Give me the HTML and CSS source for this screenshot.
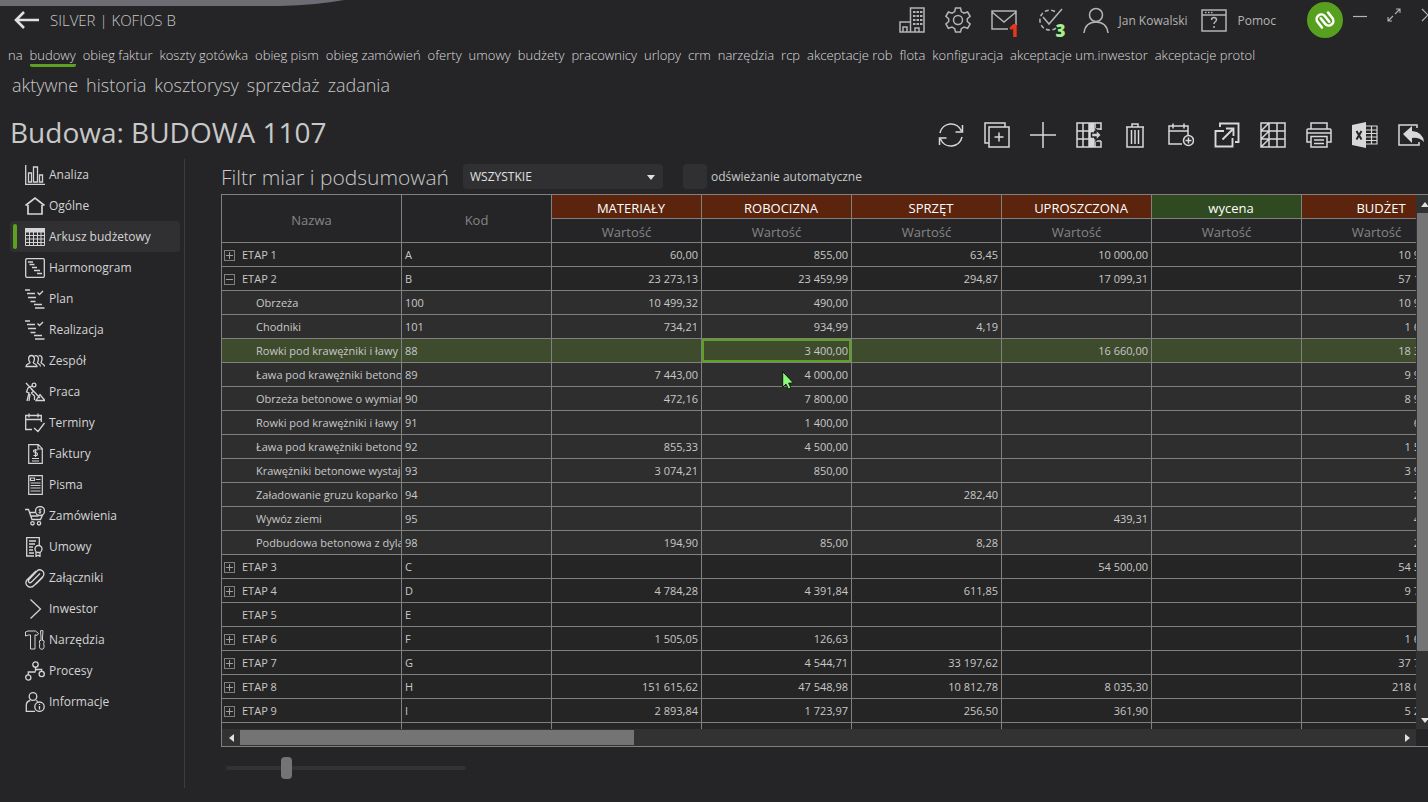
FILE: index.html
```html
<!DOCTYPE html>
<html lang="pl">

<head>
    <meta charset="UTF-8">
    <meta name="viewport" content="width=device-width, initial-scale=1.0">
    <title>Budowa: BUDOWA 1107</title>
    <link rel="stylesheet" href="styles.css">
</head>

<body>
    <svg class="backdrop" width="344" height="6" viewBox="0 0 344 6"><path d="M0 0H344Q318 5 280 6H0z"/></svg>

    <header class="topbar">
        <button class="icon-btn back" aria-label="Wstecz">
            <svg width="26" height="18" viewBox="0 0 26 18"><path d="M25 9H2M10 1L2 9l8 8" stroke-width="2.6"/></svg>
        </button>
        <span class="app-name">SILVER | KOFIOS B</span>
        <div class="top-tools">
            <button class="icon-btn" aria-label="Firma">
                <svg width="26" height="26" viewBox="0 0 26 26"><path d="M11.500 25V1H25v24H1V15h10.500M4 25v-5h4v5M16 25v-4h4v4"/><path d="M14 5h2.500M17.500 5H20M21 5h2.500M14 9h2.500M17.500 9H20M21 9h2.500M14 13h2.500M17.500 13H20M21 13h2.500M14 17h2.500M17.500 17H20M21 17h2.500" stroke-width="2.200"/></svg>
            </button>
            <button class="icon-btn" aria-label="Ustawienia">
                <svg width="26" height="26" viewBox="0 0 26 26"><circle cx="13" cy="13" r="4.500"/><path d="M10.500 1h5l.8 3.600 2.700 1.600 3.600-1.200 2.500 4.300-2.800 2.500v2.700l2.800 2.500-2.500 4.300-3.600-1.200-2.700 1.600-.8 3.300h-5l-.8-3.300L7 20.100l-3.600 1.200L.9 17l2.800-2.500v-2.700L.9 9.300 3.400 5 7 6.200l2.700-1.600z"/></svg>
            </button>
            <button class="icon-btn" aria-label="Wiadomości">
                <svg width="26" height="26" viewBox="0 0 26 26"><path d="M17 22H1V4h24v14M1 5l12 10L25 5"/></svg>
                <span class="badge red">1</span>
            </button>
            <button class="icon-btn" aria-label="Akceptacje">
                <svg width="26" height="26" viewBox="0 0 26 26"><path d="M18 4.500A10 10 0 1 0 21 19" stroke-dasharray="4 2.500"/><path d="M6 10l6 7L25 2"/></svg>
                <span class="badge green">3</span>
            </button>
            <button class="icon-btn user">
                <svg width="26" height="26" viewBox="0 0 26 26"><circle cx="13" cy="8" r="6.500"/><path d="M1 26c1-8 6-11 12-11s11 3 12 11"/></svg>
                <span>Jan Kowalski</span>
            </button>
            <button class="icon-btn help">
                <svg width="26" height="26" viewBox="0 0 26 26"><path d="M1 3h24v21H1zM1 8h24"/><path d="M4 5.500h1.500M7 5.500h1.500M10 5.500h1.500" stroke-width="1.500"/><path d="M10.500 13q0-2.500 2.500-2.500t2.500 2.300c0 2-2.500 2-2.500 4.200M13 19v2"/></svg>
                <span>Pomoc</span>
            </button>
            <svg class="logo" width="36" height="36" viewBox="0 0 36 36"><circle class="disc" cx="18" cy="18" r="18"/><path transform="translate(18 18) rotate(-38)" d="M-7 4V-3a4.650 4.650 0 0 1 9.300 0V4M7-4V3a4.650 4.650 0 0 1-9.300 0V-4"/></svg>
            <div class="window-buttons">
                <button class="icon-btn" aria-label="Minimalizuj"><svg width="14" height="14" viewBox="0 0 14 14"><path d="M0 8.500h14" stroke-width="1.200"/></svg></button>
                <button class="icon-btn" aria-label="Maksymalizuj"><svg width="14" height="14" viewBox="0 0 14 14"><path d="M8 6l5-5M9 1h4v4M6 8l-5 5M1 9v4h4" stroke-width="1.100"/></svg></button>
                <button class="icon-btn" aria-label="Zamknij"><svg width="14" height="14" viewBox="0 0 14 14"><path d="M1 1l12 12M13 1L1 13" stroke-width="1.200"/></svg></button>
            </div>
        </div>
    </header>

    <nav class="modules">
        <a href="#">na</a>
        <a href="#" class="active">budowy</a>
        <a href="#">obieg faktur</a>
        <a href="#">koszty gotówka</a>
        <a href="#">obieg pism</a>
        <a href="#">obieg zamówień</a>
        <a href="#">oferty</a>
        <a href="#">umowy</a>
        <a href="#">budżety</a>
        <a href="#">pracownicy</a>
        <a href="#">urlopy</a>
        <a href="#">crm</a>
        <a href="#">narzędzia</a>
        <a href="#">rcp</a>
        <a href="#">akceptacje rob</a>
        <a href="#">flota</a>
        <a href="#">konfiguracja</a>
        <a href="#">akceptacje um.inwestor</a>
        <a href="#">akceptacje protol</a>
    </nav>

    <nav class="submenu">
        <a href="#">aktywne</a>
        <a href="#">historia</a>
        <a href="#">kosztorysy</a>
        <a href="#">sprzedaż</a>
        <a href="#">zadania</a>
    </nav>

    <div class="title-row">
        <h1>Budowa: BUDOWA 1107</h1>
        <div class="actions">
            <button class="icon-btn" aria-label="Odśwież"><svg width="26" height="26" viewBox="0 0 26 26"><path d="M2 11A11.300 11.300 0 0 1 23.500 9M24.500 3v7h-7M24 15A11.300 11.300 0 0 1 2.500 17M1.500 23v-7h7"/></svg></button>
            <button class="icon-btn" aria-label="Duplikuj"><svg width="26" height="26" viewBox="0 0 26 26"><path d="M5 5h20v20H5zM5 21H1V1h20v4M15 10.500v9M10.500 15h9"/></svg></button>
            <button class="icon-btn" aria-label="Dodaj"><svg width="26" height="26" viewBox="0 0 26 26"><path d="M13 0v26M0 13h26"/></svg></button>
            <button class="icon-btn" aria-label="Kolumny"><svg width="26" height="26" viewBox="0 0 26 26"><path d="M25 8V1H1v24h24v-6M7 1v24M13 1v24M19 1v8M19 17v8M1 9h12M1 17h12M19 7h6M19 19h6"/><path class="fill" d="M13 1h5v24h-5z"/><path d="M15.500 11H20V7.500l5.500 5.500-5.500 5.500V15h-4.500z" class="cut"/></svg></button>
            <button class="icon-btn" aria-label="Usuń"><svg width="26" height="26" viewBox="0 0 26 26"><path d="M4 5h18M5 5v20h16V5M10 5V2h6v3M9.500 8v14M13 8v14M16.500 8v14"/></svg></button>
            <button class="icon-btn" aria-label="Dodaj termin"><svg width="26" height="26" viewBox="0 0 26 26"><path d="M14 22H1V4h19v10M1 9h19M5 1.500v5M16 1.500v5"/><circle cx="20.500" cy="18.500" r="5"/><path d="M20.500 15.500v6M17.500 18.500h6"/></svg></button>
            <button class="icon-btn" aria-label="Otwórz"><svg width="26" height="26" viewBox="0 0 26 26"><path d="M10 9H1.500v15.500h17V16M6 5V1.500h18.500V20H21" stroke-width="1.900"/><path d="M8.500 17.500L19 7M12 6.500h7.500V14" stroke-width="1.900"/></svg></button>
            <button class="icon-btn" aria-label="Siatka"><svg width="26" height="26" viewBox="0 0 26 26"><path d="M1 1h24v24H1zM9 1v24M17 1v24M1 9h24M1 17h24M1 9l8-8M1 17l8-8M1 25l8-8"/></svg></button>
            <button class="icon-btn" aria-label="Drukuj"><svg width="26" height="26" viewBox="0 0 26 26"><path d="M5 7V1h16v6M5 20H1V8q0-1 1-1h22q1 0 1 1v12h-4M1 11h24M5 14.500h16V25H5zM8 18h10M8 21.500h10"/></svg></button>
            <button class="icon-btn" aria-label="Eksport do Excela"><svg width="26" height="26" viewBox="0 0 26 26"><path class="fill" d="M0 3L14 0v26L0 23z"/><path d="M4.500 9l5 8.500M9.500 9l-5 8.500" class="dark"/><path d="M14 4h11v18H14M14 8h11M14 11.500h11M14 15h11M14 18.500h11M19.500 4v18" stroke-width="1.200"/></svg></button>
            <button class="icon-btn" aria-label="Wyjdź"><svg width="26" height="26" viewBox="0 0 26 26"><path d="M19 6V3H1v20h20v-3"/><path class="fill" d="M5 12l9-8v5q11 1 12 11-5-5-12-4v5z"/></svg></button>
        </div>
    </div>

    <main class="workspace">
        <nav class="sidebar">
            <a href="#"><svg width="20" height="20" viewBox="0 0 20 20"><path d="M.7 0v19.300H20M3.500 17V8h3v9zM8.500 17V2h4v15zM14.500 17v-7h3v7z"/></svg>Analiza</a>
            <a href="#"><svg width="20" height="20" viewBox="0 0 20 20"><path d="M.5 9.500L10 2l9.500 7.500M3 9v9h14V9" stroke-width="1.700"/></svg>Ogólne</a>
            <a href="#" class="active"><svg width="20" height="20" viewBox="0 0 20 20"><path class="fill" d="M0 1h20v4.500H0z"/><path d="M.5 2v16.500h19V2M0 8.500h20M0 12h20M0 15.500h20M4.500 5v13M8.500 5v13M12.500 5v13M16 5v13" stroke-width="1"/></svg>Arkusz budżetowy</a>
            <a href="#"><svg width="20" height="20" viewBox="0 0 20 20"><rect x=".7" y=".7" width="18.600" height="18.600" rx="1"/><path d="M3 4h5M4.500 6.500h5M7 9.500h5M9 12.500h6M12 15.500h5" stroke-width="1.300"/></svg>Harmonogram</a>
            <a href="#"><svg width="20" height="20" viewBox="0 0 20 20"><path d="M0 1h5M2 4.500h8M3 8.500h8M5.500 12.500h5M9 15.500h8M10 19h9.500M12.500 3.500l2 2L18 2"/></svg>Plan</a>
            <a href="#"><svg width="20" height="20" viewBox="0 0 20 20"><path d="M0 1h5M2 4.500h8M3 8.500h8M5.500 12.500h5M9 15.500h8M10 19h9.500M12.500 3.500l2 2L18 2"/></svg>Realizacja</a>
            <a href="#"><svg width="20" height="20" viewBox="0 0 20 20"><path d="M1 15.500c0-3 4-2.500 4-4C3 9 3 4.500 6.500 4.500S10 9 8.300 11.500c0 1.500 3.700 1 3.700 4zM9.500 5c3.500-1.500 5 2.500 3 6.500 0 1.500 3 1 3 4M13.500 5c3.500-1.500 4.500 2.500 2.500 6.500 0 1.500 3.500 1 3.500 4"/></svg>Zespół</a>
            <a href="#"><svg width="20" height="20" viewBox="0 0 20 20"><circle cx="9" cy="3" r="1.900"/><path d="M1 1l14 15M7 4L3 6 1.500 10 4 11l-2 8M6 7l2.500 2-2 2 3 3v4M5 12l-1 7M11 18.500l4-6 1.500 2L20 18.500z"/></svg>Praca</a>
            <a href="#"><svg width="20" height="20" viewBox="0 0 20 20"><path d="M7 16.500H.7V2.500h15.600V9M.7 6.500h15.600M4 .5v4M13 .5v4M9 15l4 3.500L19.500 10"/></svg>Terminy</a>
            <a href="#"><svg width="20" height="20" viewBox="0 0 20 20"><path d="M3.700.7h9.600l4 4v14.600H3.700zM13 1v4h4M7 14.500h7M7 17h7M12.500 6H9.800C8 6 8 8.500 10.500 8.500S13 11.500 11 11.500H8.500M10.500 5v8" stroke-width="1.200"/></svg>Faktury</a>
            <a href="#"><svg width="20" height="20" viewBox="0 0 20 20"><path d="M3.700.7h13.600v18.600H3.700zM5.500 3h4v2.500h-4zM11 4.500h4.500M5.500 8h10M5.500 10.500h10M5.500 13h10M5.500 16h10" stroke-width="1.200"/></svg>Pisma</a>
            <a href="#"><svg width="20" height="20" viewBox="0 0 20 20"><path d="M0 3.500h3.500L7 13.500h8.500L17.500 9M4.500 6.500H10M5.500 10h8"/><circle cx="7.500" cy="17.300" r="1.700"/><circle cx="14" cy="17.300" r="1.700"/><circle cx="15" cy="5" r="4.500"/><path d="M16.500 3.500h-1.700c-1.500 0-1 1.500.2 1.500s1.500 1.700 0 1.700h-1.500M15 2.500v5.500" stroke-width=".9"/></svg>Zamówienia</a>
            <a href="#"><svg width="20" height="20" viewBox="0 0 20 20"><path d="M9 19H1.700V.7h12.600V8M4 4h7M4 7h6M4 10h4M4 13h4M4 16h5M11 15v4.500l2-1.200 2 1.200V15"/><circle cx="13.500" cy="12" r="3.500"/></svg>Umowy</a>
            <a href="#"><svg width="20" height="20" viewBox="0 0 20 20"><path d="M15 5.500l-8.500 8.500c-2 2-4-.5-2.500-2.500l8-8.500c3-3 9 .5 6 5.500l-9 9c-3.500 3.500-10 .5-7.500-5L11 3M18 9l-7 7"/></svg>Załączniki</a>
            <a href="#"><svg width="20" height="20" viewBox="0 0 20 20"><path d="M5.500.5l10 9.500-10 9.500"/></svg>Inwestor</a>
            <a href="#"><svg width="20" height="20" viewBox="0 0 20 20"><path d="M.5 2L3 1h7.500l3 2.500L12 5.500l-2-.7V19H5.500V5H3.500L.5 6zM15.500.7h2.500L17.500 7v3.500h1.200q1 1.500 0 3.200 1.300 5.600-1.900 5.600t-2-5.600q-1-1.700 0-3.200H16V7z" stroke-width="1"/></svg>Narzędzia</a>
            <a href="#"><svg width="20" height="20" viewBox="0 0 20 20"><circle cx="10.500" cy="3.500" r="2.700"/><circle cx="3.300" cy="16.500" r="2.600"/><circle cx="16.700" cy="13" r="2.600"/><path d="M10.500 6v4.500M3.300 14v-3h7.200M10.500 8.500h6.200v2"/></svg>Procesy</a>
            <a href="#"><svg width="20" height="20" viewBox="0 0 20 20"><circle cx="8" cy="4.500" r="3.800"/><path d="M10 19.300H1.300V13c0-3 2-4 4-4.500M11 8.500l2 1"/><circle cx="14.500" cy="14.700" r="4.700"/><path d="M14.500 12v1M14.500 14v3.500"/></svg>Informacje</a>
        </nav>

        <section class="content">
            <div class="filters">
                <label for="measure-filter" class="filter-label">Filtr miar i podsumowań</label>
                <div class="select-box">
                    <select id="measure-filter">
                        <option>WSZYSTKIE</option>
                    </select>
                </div>
                <input type="checkbox" id="auto-refresh">
                <label for="auto-refresh" class="check-label">odświeżanie automatyczne</label>
            </div>

            <div class="sheet">
                <div class="sheet-view">
                    <table>
                        <colgroup><col class="col-name"><col span="7"></colgroup>
                        <thead>
                            <tr>
                                <th rowspan="2">Nazwa</th>
                                <th rowspan="2">Kod</th>
                                <th class="group">MATERIAŁY</th>
                                <th class="group">ROBOCIZNA</th>
                                <th class="group">SPRZĘT</th>
                                <th class="group">UPROSZCZONA</th>
                                <th class="group quote">wycena</th>
                                <th class="group">BUDŻET</th>
                            </tr>
                            <tr><th>Wartość</th><th>Wartość</th><th>Wartość</th><th>Wartość</th><th>Wartość</th><th>Wartość</th></tr>
                        </thead>
                        <tbody>
                            <tr><td><button class="expander" aria-label="Rozwiń"></button>ETAP 1</td><td>A</td><td>60,00</td><td>855,00</td><td>63,45</td><td>10 000,00</td><td></td><td>10 978,45</td></tr>
                            <tr><td><button class="expander open" aria-label="Zwiń"></button>ETAP 2</td><td>B</td><td>23 273,13</td><td>23 459,99</td><td>294,87</td><td>17 099,31</td><td></td><td>57 127,30</td></tr>
                            <tr class="child"><td>Obrzeża</td><td>100</td><td>10 499,32</td><td>490,00</td><td></td><td></td><td></td><td>10 989,32</td></tr>
                            <tr class="child"><td>Chodniki</td><td>101</td><td>734,21</td><td>934,99</td><td>4,19</td><td></td><td></td><td>1 673,39</td></tr>
                            <tr class="child selected"><td>Rowki pod krawężniki i ławy</td><td>88</td><td></td><td class="current">3 400,00</td><td></td><td>16 660,00</td><td></td><td>18 360,00</td></tr>
                            <tr class="child"><td>Ława pod krawężniki betonowe</td><td>89</td><td>7 443,00</td><td>4 000,00</td><td></td><td></td><td></td><td>9 943,00</td></tr>
                            <tr class="child"><td>Obrzeża betonowe o wymiarach</td><td>90</td><td>472,16</td><td>7 800,00</td><td></td><td></td><td></td><td>8 972,16</td></tr>
                            <tr class="child"><td>Rowki pod krawężniki i ławy</td><td>91</td><td></td><td>1 400,00</td><td></td><td></td><td></td><td>640,00</td></tr>
                            <tr class="child"><td>Ława pod krawężniki betonowe</td><td>92</td><td>855,33</td><td>4 500,00</td><td></td><td></td><td></td><td>1 555,33</td></tr>
                            <tr class="child"><td>Krawężniki betonowe wystające</td><td>93</td><td>3 074,21</td><td>850,00</td><td></td><td></td><td></td><td>3 924,21</td></tr>
                            <tr class="child"><td>Załadowanie gruzu koparko</td><td>94</td><td></td><td></td><td>282,40</td><td></td><td></td><td>282,40</td></tr>
                            <tr class="child"><td>Wywóz ziemi</td><td>95</td><td></td><td></td><td></td><td>439,31</td><td></td><td>439,31</td></tr>
                            <tr class="child"><td>Podbudowa betonowa z dylatacją</td><td>98</td><td>194,90</td><td>85,00</td><td>8,28</td><td></td><td></td><td>288,18</td></tr>
                            <tr><td><button class="expander" aria-label="Rozwiń"></button>ETAP 3</td><td>C</td><td></td><td></td><td></td><td>54 500,00</td><td></td><td>54 500,00</td></tr>
                            <tr><td><button class="expander" aria-label="Rozwiń"></button>ETAP 4</td><td>D</td><td>4 784,28</td><td>4 391,84</td><td>611,85</td><td></td><td></td><td>9 787,97</td></tr>
                            <tr class="leaf"><td>ETAP 5</td><td>E</td><td></td><td></td><td></td><td></td><td></td><td></td></tr>
                            <tr><td><button class="expander" aria-label="Rozwiń"></button>ETAP 6</td><td>F</td><td>1 505,05</td><td>126,63</td><td></td><td></td><td></td><td>1 631,68</td></tr>
                            <tr><td><button class="expander" aria-label="Rozwiń"></button>ETAP 7</td><td>G</td><td></td><td>4 544,71</td><td>33 197,62</td><td></td><td></td><td>37 742,33</td></tr>
                            <tr><td><button class="expander" aria-label="Rozwiń"></button>ETAP 8</td><td>H</td><td>151 615,62</td><td>47 548,98</td><td>10 812,78</td><td>8 035,30</td><td></td><td>218 012,68</td></tr>
                            <tr><td><button class="expander" aria-label="Rozwiń"></button>ETAP 9</td><td>I</td><td>2 893,84</td><td>1 723,97</td><td>256,50</td><td>361,90</td><td></td><td>5 236,21</td></tr>
                            <tr><td></td><td></td><td></td><td></td><td></td><td></td><td></td><td></td></tr>
                        </tbody>
                    </table>
                </div>
                <div class="scrollbar vertical">
                    <button aria-label="W górę"><svg width="8" height="5" viewBox="0 0 8 5"><path d="M0 5l4-5 4 5z"/></svg></button>
                    <div class="track"><div class="thumb"></div></div>
                    <button aria-label="W dół"><svg width="8" height="5" viewBox="0 0 8 5"><path d="M0 0l4 5 4-5z"/></svg></button>
                </div>
                <div class="scrollbar horizontal">
                    <button aria-label="W lewo"><svg width="5" height="8" viewBox="0 0 5 8"><path d="M5 0L0 4l5 4z"/></svg></button>
                    <div class="track"><div class="thumb"></div></div>
                    <button aria-label="W prawo"><svg width="5" height="8" viewBox="0 0 5 8"><path d="M0 0l5 4-5 4z"/></svg></button>
                </div>
            </div>

            <input type="range" class="zoom" min="0" max="100" value="24" aria-label="Powiększenie">
        </section>
    </main>

    <svg class="pointer" width="12" height="19" viewBox="0 0 12 19"><path d="M.7.7v15.500l3.300-3 2.500 5 2.500-1.200-2.300-4.800 4.800-.2z"/></svg>
</body>

</html>
```
FILE: styles.css
```css
* {
    box-sizing: border-box;
}

body {
    font-family: "Open Sans", "Noto Sans", sans-serif;
    font-size: 13px;
    background-color: #252527;
    color: #c8c8c8;
    margin: 0;
    height: 100vh;
    overflow: hidden;
    display: flex;
    flex-direction: column;
}

a {
    color: inherit;
    text-decoration: none;
}

button {
    background: none;
    border: none;
    padding: 0;
    color: inherit;
    font: inherit;
    cursor: pointer;
}

svg {
    display: block;
    flex: none;
    fill: none;
    stroke: currentColor;
    stroke-width: 1.5;
}

svg .fill {
    fill: currentColor;
    stroke: none;
}

svg .cut {
    fill: #d0d0d0;
    stroke: #252527;
}

svg .dark {
    stroke: #252527;
    stroke-width: 2;
}

.backdrop {
    position: absolute;
    top: 0;
    left: 0;
    fill: #6d6c74;
    stroke: none;
}

.topbar {
    display: flex;
    align-items: center;
    height: 40px;
    flex: none;
    padding-left: 14px;
    gap: 10px;
    white-space: nowrap;
}

.app-name {
    font-size: 15px;
    font-weight: 300;
}

.icon-btn {
    position: relative;
    display: flex;
    align-items: center;
    flex: none;
}

.back {
    color: #e0e0e0;
}

.top-tools {
    display: flex;
    align-items: center;
    gap: 20px;
    margin-left: auto;
    margin-right: -7px;
    color: #b4b4b4;
}

.user,
.help {
    gap: 10px;
    font-size: 12px;
}

.help {
    margin-left: -6px;
}

.badge {
    position: absolute;
    right: -2px;
    bottom: -8px;
    font-size: 17px;
    font-weight: 800;
    line-height: 20px;
}

.red {
    color: #e8391f;
}

.green {
    color: #a4f08c;
    right: -3px;
}

.logo {
    margin-left: 11px;
    stroke: #fff;
    stroke-width: 2.6;
    stroke-linecap: round;
}

.logo .disc {
    fill: #57a01f;
    stroke: none;
}

.window-buttons {
    display: flex;
    align-self: flex-start;
    gap: 20px;
    margin-left: -10px;
    height: 25px;
}

.modules {
    display: flex;
    flex: none;
    gap: 7px;
    height: 32px;
    padding-left: 8px;
    font-size: 13px;
    font-weight: 300;
    line-height: 18px;
    padding-top: 6px;
    white-space: nowrap;
    color: #dcdcdc;
}

.modules a {
    height: 21px;
}

.modules .active {
    border-bottom: 3px solid #5ea022;
    border-radius: 2px;
}

.submenu {
    display: flex;
    flex: none;
    gap: 8px;
    padding-left: 12px;
    font-size: 18px;
    font-weight: 300;
    line-height: 26px;
}

.title-row {
    display: flex;
    flex: none;
    justify-content: space-between;
    align-items: center;
    height: 48px;
    margin-top: 13px;
    padding-left: 10px;
    white-space: nowrap;
}

h1 {
    margin: 0;
    padding-bottom: 7px;
    font-size: 28px;
    font-weight: 400;
    line-height: 40px;
}

.actions {
    display: flex;
    gap: 20px;
    margin-right: 4px;
    color: #d8d8d8;
}

.workspace {
    flex: 1;
    min-height: 0;
    display: flex;
}

.sidebar {
    flex: none;
    width: 185px;
    border-right: 1px solid #3c3c3e;
    margin-bottom: 14px;
    padding-right: 4px;
    padding-left: 10px;
    font-size: 12px;
    color: #d4d4d4;
}

.sidebar a {
    display: flex;
    align-items: center;
    gap: 4px;
    height: 31px;
    padding-left: 15px;
    border-radius: 4px;
}

.sidebar svg {
    stroke-width: 1.3;
}

.sidebar .active {
    background-color: #303032;
    padding-left: 3px;
}

.sidebar .active::before {
    content: "";
    width: 4px;
    height: 25px;
    margin-right: 4px;
    border-radius: 2px;
    background-color: #5ea022;
}

.content {
    flex: 1;
    min-width: 0;
    display: flex;
    flex-direction: column;
    padding-left: 36px;
}

.filters {
    display: flex;
    align-items: center;
    height: 35px;
    flex: none;
}

.filter-label {
    font-size: 21px;
    font-weight: 300;
    line-height: 30px;
    margin-right: 14px;
    white-space: nowrap;
}

.check-label {
    font-size: 12px;
}

.select-box {
    position: relative;
    width: 200px;
    margin-right: 20px;
}

.select-box::after {
    content: "";
    position: absolute;
    right: 8px;
    top: 11px;
    border: 4px solid transparent;
    border-top: 5px solid #e0e0e0;
    border-bottom: none;
    pointer-events: none;
}

select {
    appearance: none;
    display: block;
    width: 100%;
    height: 25px;
    border: none;
    border-radius: 4px;
    padding: 0 7px;
    background-color: #303032;
    color: #e0e0e0;
    font: inherit;
    font-size: 12px;
}

input[type="checkbox"] {
    appearance: none;
    width: 24px;
    height: 25px;
    margin: 0 4px 0 0;
    border-radius: 4px;
    background-color: #303032;
}

.sheet {
    flex: 1;
    min-height: 0;
    display: grid;
    grid-template-columns: minmax(0, 1fr) 17px;
    grid-template-rows: minmax(0, 1fr) 17px;
    margin-right: -6px;
    border: 1px solid #808080;
}

.sheet-view {
    overflow: hidden;
    background-color: #252525;
}

table {
    width: 1230px;
    table-layout: fixed;
    border-collapse: separate;
    border-spacing: 0;
    font-size: 11px;
}

col {
    width: 150px;
}

.col-name {
    width: 180px;
}

th,
td {
    height: 24px;
    padding: 0 3px;
    border-right: 1px solid #808080;
    border-bottom: 1px solid #808080;
    overflow: hidden;
    white-space: nowrap;
    text-align: right;
    line-height: 16px;
}

th {
    padding-top: 2px;
    background-color: #252527;
    color: #858585;
    font-size: 13px;
    font-weight: 400;
    text-align: center;
}

.group {
    padding-left: 12px;
    background-color: #5c240d;
    color: #fff;
}

.quote {
    background-color: #2f4a20;
}

td:nth-child(1),
td:nth-child(2) {
    text-align: left;
}

td:nth-child(1) {
    padding: 0 0 0 2px;
}

.leaf td:nth-child(1) {
    padding-left: 20px;
}

.child td {
    background-color: #2e2e2e;
}

.child td:nth-child(1) {
    padding-left: 34px;
}

.selected td {
    background-color: #3e4b2d;
}

.selected .current {
    box-shadow: inset 0 0 0 2px #5ea022;
}

.expander {
    width: 11px;
    height: 11px;
    margin-right: 7px;
    border: 1px solid #808080;
    vertical-align: -1px;
    background: linear-gradient(#a0a0a0, #a0a0a0) center / 7px 1px no-repeat, linear-gradient(#a0a0a0, #a0a0a0) center / 1px 7px no-repeat;
}

.expander.open {
    background: linear-gradient(#a0a0a0, #a0a0a0) center / 7px 1px no-repeat;
}

.scrollbar {
    display: flex;
    background-color: #323232;
}

.scrollbar svg {
    margin: auto;
    fill: #e0e0e0;
    stroke: none;
}

.scrollbar button {
    flex: none;
    width: 18px;
    height: 18px;
}

.track {
    flex: 1;
}

.thumb {
    background-color: #747474;
}

.vertical {
    flex-direction: column;
}

.vertical .thumb {
    height: 88%;
    margin: 0 1px;
}

.horizontal .thumb {
    width: 34%;
    height: 15px;
    margin: 1px 0;
}

.zoom {
    appearance: none;
    flex: none;
    width: 240px;
    height: 22px;
    margin: 10px 0 23px 5px;
    background: none;
}

.zoom::-webkit-slider-runnable-track {
    height: 4px;
    border-radius: 2px;
    background-color: #323234;
}

.zoom::-webkit-slider-thumb {
    appearance: none;
    width: 11px;
    height: 22px;
    margin-top: -9px;
    border-radius: 4px;
    background-color: #747476;
}

.pointer {
    position: absolute;
    left: 782px;
    top: 371px;
    fill: #8cf878;
    stroke: #101010;
    stroke-width: 1;
}
```
